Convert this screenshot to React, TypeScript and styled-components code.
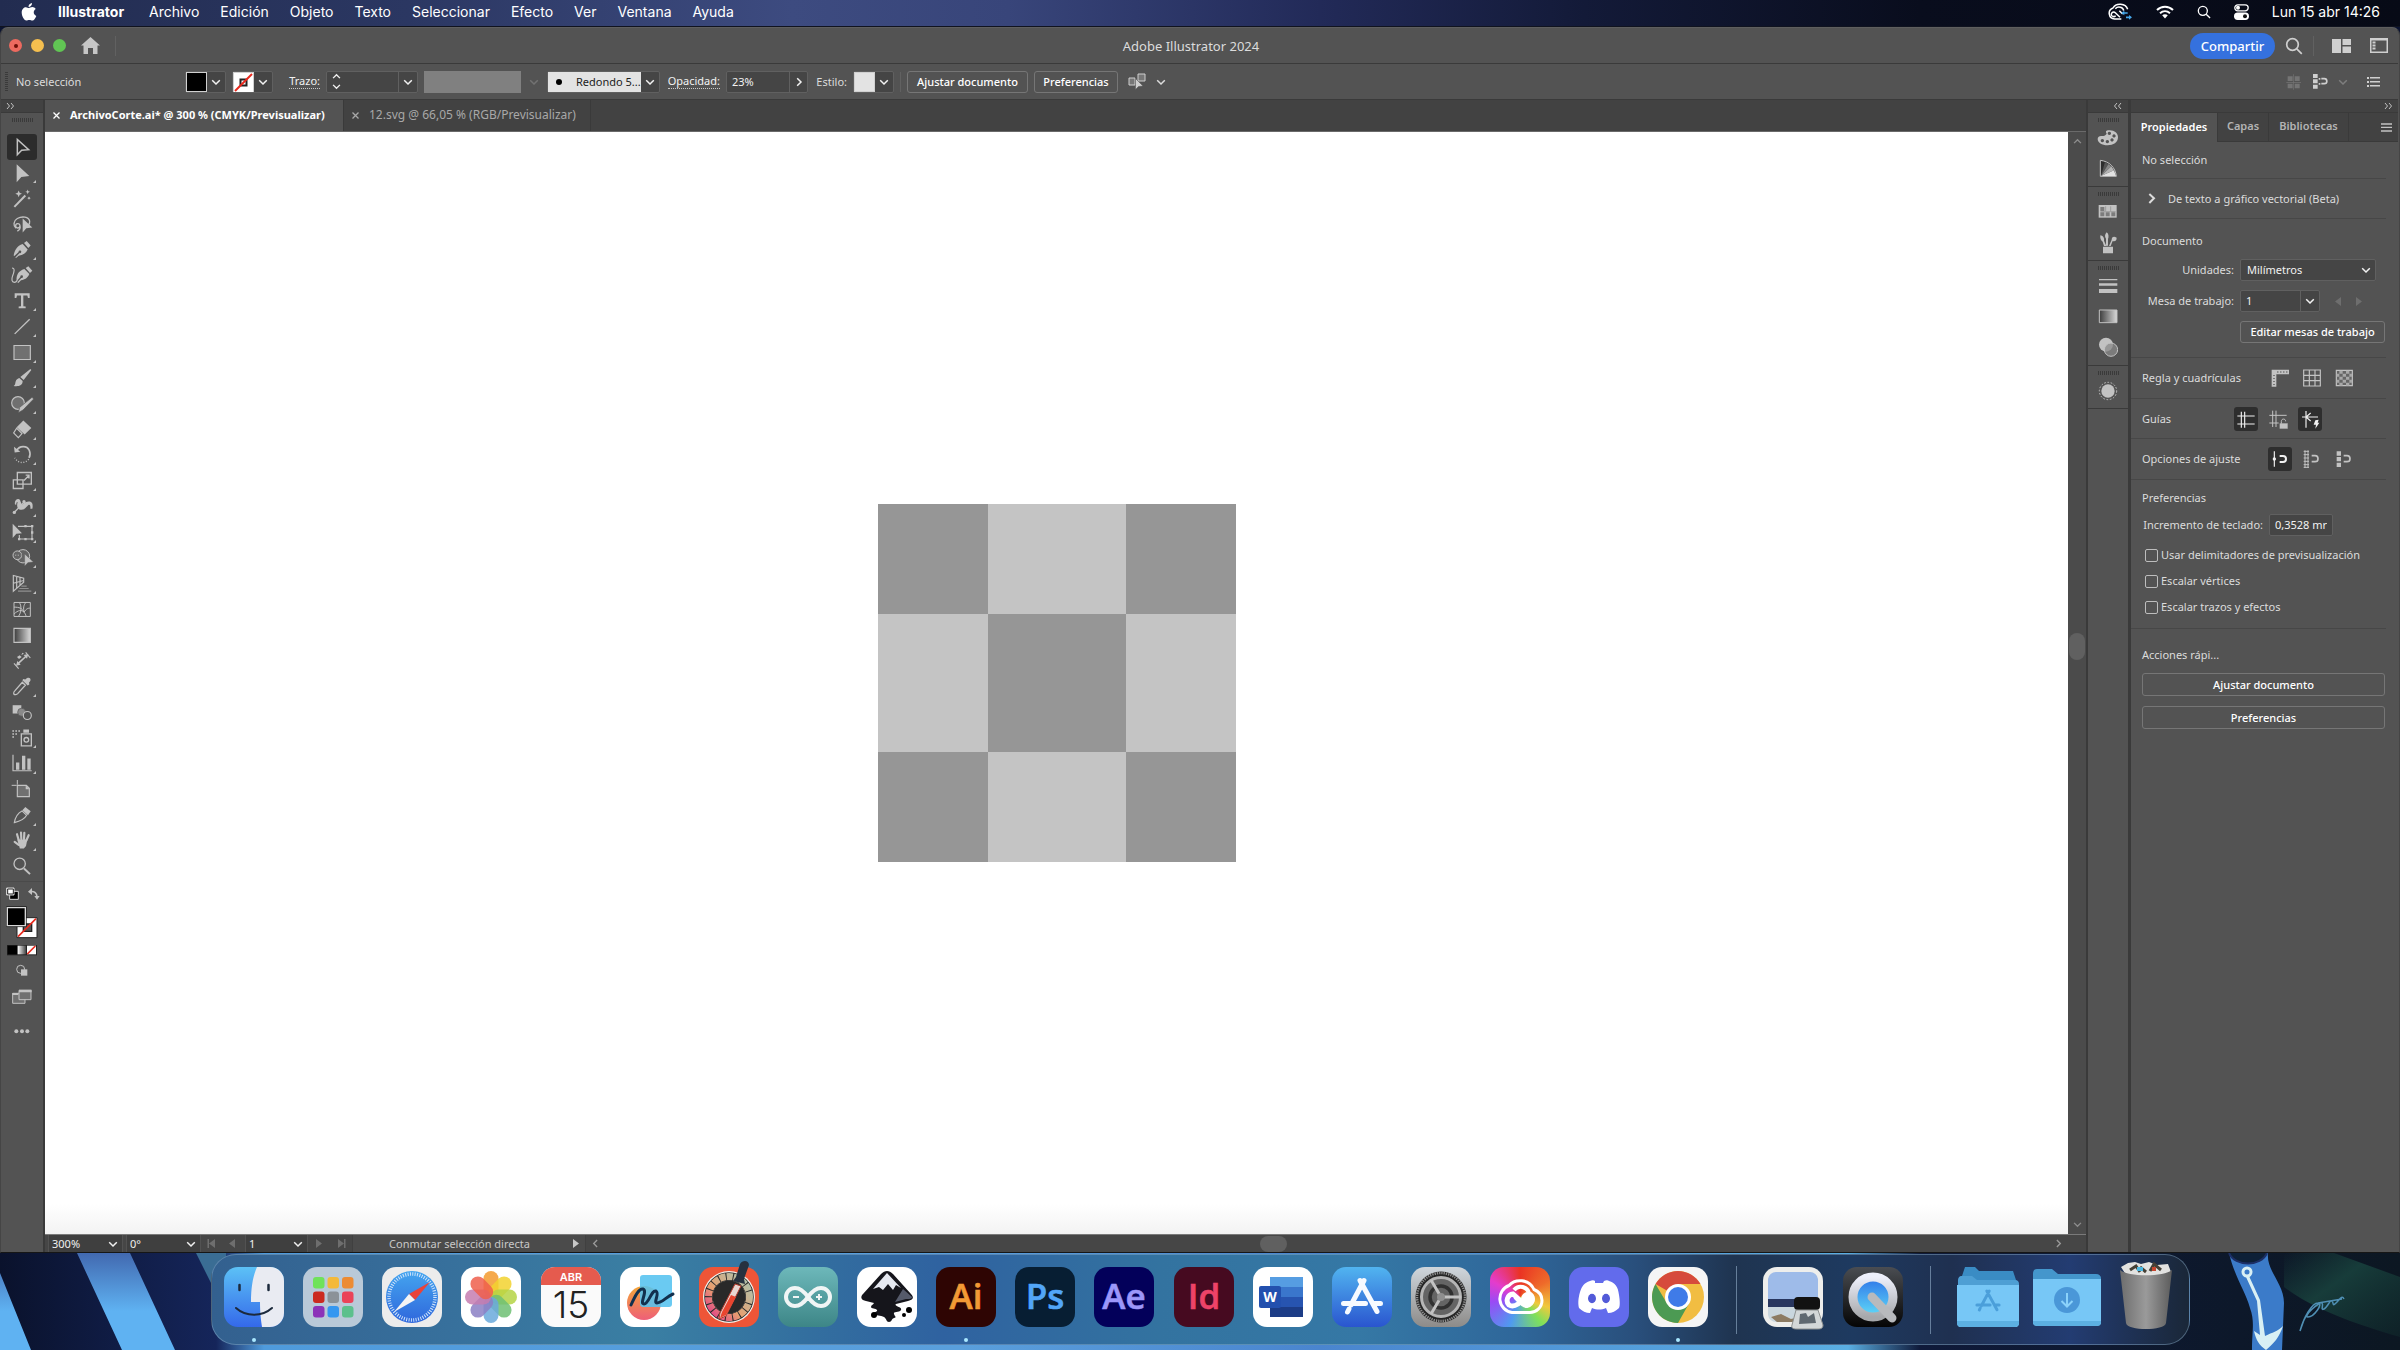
import React from "react";
import styled, { createGlobalStyle, css } from "styled-components";

const c = {
  panel: "#535353",
  dark: "#424242",
  line: "#3a3a3a",
  field: "#454545",
  edge: "#606060",
  text: "#dcdcdc",
  icon: "#c2c2c2",
};
const ui = `"Noto Sans", "Open Sans", sans-serif`;
const mac = `Inter, "Liberation Sans", sans-serif`;

const Global = createGlobalStyle`
  *, *::before, *::after { box-sizing: border-box; }
  body { margin: 0; background: #0b1330; }
  button, input, select { font: inherit; color: inherit; margin: 0; padding: 0; border: 0; background: none; border-radius: 0; }
  svg { display: block; flex: none; }
`;

const Screen = styled.div`
  display: flex;
  flex-direction: column;
  min-height: 100vh;
  font: 11px/16px ${ui};
  color: ${c.text};
`;

/* ---------- system menu bar ---------- */
const MenuBar = styled.nav`
  display: flex;
  align-items: center;
  height: 27px;
  padding: 0 20px 2px 21px;
  font: 14px/20px ${mac};
  color: #fff;
  background: linear-gradient(90deg, #222c50 0, #2b3762 17%, #3d4b80 33%, #38457a 42%, #222a58 55%, #131a38 66%, #090d1d 80%, #070a16 100%);
  border-bottom: 1px solid #10131f;
`;
const MenuList = styled.div`
  display: flex;
  gap: 21px;
  margin-left: 21px;
`;
const MenuItem = styled.button<{ $bold?: boolean }>`
  font-weight: ${(p) => (p.$bold ? 700 : 400)};
  min-width: ${(p) => (p.$bold ? 70 : 0)}px;
  text-align: left;
`;
const Tray = styled.div`
  display: flex;
  align-items: center;
  gap: 23px;
  margin-left: auto;
`;

/* ---------- application window ---------- */
const Win = styled.main`
  flex: 1;
  display: flex;
  flex-direction: column;
  padding-right: 1px;
  background: ${c.panel};
  border: 1px solid #454545;
  border-top-color: #5e5e5e;
  border-bottom: 1px solid #161616;
  border-radius: 8px 8px 0 0;
`;
const TitleBar = styled.header`
  display: grid;
  grid-template-columns: 1fr auto 1fr;
  align-items: center;
  height: 36px;
  padding: 0 9px 0 8px;
  border-bottom: 1px solid ${c.line};
`;
const Side = styled.div<{ $end?: boolean }>`
  display: flex;
  align-items: center;
  gap: 9px;
  justify-content: ${(p) => (p.$end ? "flex-end" : "flex-start")};
`;
const Title = styled.h1`
  margin: 0;
  padding-right: 16px;
  font-size: 13px;
  line-height: 18px;
  font-weight: 400;
`;
const Light = styled.button<{ $c: string }>`
  width: 13px;
  height: 13px;
  border-radius: 50%;
  background: ${(p) => p.$c};
  display: grid;
  place-items: center;
`;
const LightDot = styled.i`
  width: 4px;
  height: 4px;
  border-radius: 50%;
  background: #6d1008;
`;
const Sep = styled.span`
  width: 1px;
  height: 20px;
  background: #616161;
`;
const IconBtn = styled.button<{ $w?: number }>`
  width: ${(p) => p.$w || 20}px;
  height: 24px;
  display: grid;
  place-items: center;
  color: #cfcfcf;
`;
const Share = styled.button`
  width: 85px;
  height: 26px;
  border-radius: 13px;
  background: #3571de;
  color: #fff;
  font-size: 13px;
  line-height: 18px;
  font-weight: 500;
`;

const ControlBar = styled.div`
  display: flex;
  align-items: center;
  gap: 6px;
  height: 36px;
  padding: 0 7px 0 4px;
  border-bottom: 1px solid ${c.line};
`;
const Grip = styled.i<{ $v?: boolean }>`
  width: ${(p) => (p.$v ? 3 : 21)}px;
  height: ${(p) => (p.$v ? 20 : 4)}px;
  background: repeating-linear-gradient(${(p) => (p.$v ? "180deg" : "90deg")}, #3a3a3a 0 1px, transparent 1px 2px);
`;
const State = styled.span`
  width: 165px;
  padding-left: 2px;
`;
const Lab = styled.label<{ $w: number; $dots?: boolean }>`
  width: ${(p) => p.$w}px;
  display: flex;
  justify-content: flex-end;
  span { border-bottom: ${(p) => (p.$dots ? "1px dotted #c8c8c8" : "0")}; line-height: 14px; ${(p) => p.$dots && "color:#f2f2f2;"} }
`;
const Combo = styled.span<{ $w?: number }>`
  display: flex;
  width: ${(p) => p.$w || 41}px;
  height: 22px;
  border: 1px solid ${c.edge};
  border-radius: 2px;
  background: ${c.field};
  color: #f2f2f2;
`;
const Part = styled.button<{ $w?: number; $l?: boolean }>`
  ${(p) => (p.$w ? `width:${p.$w}px;` : "flex:1;")}
  display: grid;
  place-items: center;
  ${(p) => p.$l && `border-left: 1px solid ${c.edge};`}
`;
const Swatch = styled.button<{ $bg: string }>`
  width: 21px;
  background: ${(p) => p.$bg};
  border: 1px solid #d0d0d0;
  display: grid;
  place-items: center;
`;
const Field = styled.input`
  flex: 1;
  min-width: 0;
  padding: 0 5px;
  outline: 0;
`;
const Pick = styled.span`
  flex: 1;
  display: grid;
  grid-template-columns: 1fr 19px;
  align-items: center;
  select {
    appearance: none;
    grid-area: 1 / 1 / 2 / 3;
    height: 100%;
    width: 100%;
    padding-left: 6px;
    outline: 0;
  }
  svg { grid-area: 1 / 2; justify-self: center; pointer-events: none; }
`;
const BrushBox = styled.span`
  display: flex;
  width: 93px;
  align-items: center;
  gap: 14px;
  padding-left: 8px;
  background: #e3e3e3;
  color: #1c1c1c;
`;
const Ghost = styled.span`
  width: 97px;
  height: 22px;
  background: #808080;
`;
const OutBtn = styled.button<{ $w?: number }>`
  ${(p) => p.$w && `width:${p.$w}px;`}
  height: 22px;
  border: 1px solid #767676;
  border-radius: 3px;
  color: #fff;
  font-weight: 500;
`;
const Grow = styled.span<{ $g?: number }>`
  flex: ${(p) => p.$g || 1};
`;

const Body = styled.div`
  flex: 1;
  display: flex;
  background: ${c.dark};
`;
const ToolCol = styled.aside`
  width: 44px;
  display: flex;
  flex-direction: column;
  background: ${c.panel};
  border-right: 2px solid ${c.line};
`;
const Collapse = styled.button<{ $end?: boolean }>`
  height: 13px;
  padding: 0 5px;
  background: ${c.dark};
  border-bottom: 1px solid ${c.line};
  color: ${c.icon};
  display: flex;
  align-items: center;
  justify-content: ${(p) => (p.$end ? "flex-end" : "flex-start")};
`;
const GripRow = styled.div`
  height: 9px;
  display: grid;
  place-items: end center;
`;
const Tools = styled.div`
  margin-top: 12px;
  height: 746px;
  padding-right: 1px;
  display: flex;
  flex-direction: column;
  align-items: center;
`;
const Tool = styled.button<{ $on?: boolean }>`
  flex: 1;
  width: 30px;
  display: grid;
  place-items: center;
  color: ${c.icon};
  border-radius: 3px;
  background: ${(p) => (p.$on ? "#2c2c2c" : "transparent")};
`;
const Swatches = styled.div`
  margin-top: 1px;
  padding-right: 1px;
  border-top: 1px solid #4a4a4a;
  display: flex;
  justify-content: center;
  color: ${c.icon};
`;

const Center = styled.section`
  flex: 1;
  min-width: 0;
  display: flex;
  flex-direction: column;
`;
const Tabs = styled.div`
  display: flex;
  height: 32px;
  border-bottom: 1px solid #6a6a6a;
`;
const Tab = styled.div<{ $on?: boolean; $w: number }>`
  display: flex;
  align-items: center;
  gap: 9px;
  min-width: ${(p) => p.$w}px;
  padding: 0 4px 1px 7px;
  font-weight: ${(p) => (p.$on ? 700 : 400)};
  font-size: ${(p) => (p.$on ? 11 : 12)}px;
  white-space: nowrap;
  color: ${(p) => (p.$on ? "#fff" : "#a8a8a8")};
  background: ${(p) => (p.$on ? c.panel : "transparent")};
  border-right: 1px solid ${c.line};
`;
const TabX = styled.button`
  width: 9px;
  height: 16px;
  display: grid;
  place-items: center;
`;
const CanvasRow = styled.div`
  flex: 1;
  display: flex;
`;
const Canvas = styled.div`
  flex: 1;
  display: grid;
  place-content: center;
  grid-template: 110px 138px 110px / 110px 138px 110px;
  background: linear-gradient(0deg, #f3f3f3 0, #fff 30px);
`;
const Cell = styled.i<{ $d: boolean }>`
  background: ${(p) => (p.$d ? "#969696" : "#c4c4c4")};
`;
const VScroll = styled.div`
  width: 18px;
  display: flex;
  flex-direction: column;
  align-items: center;
  padding: 5px 0;
  background: #4b4b4b;
  color: #8d8d8d;
`;
const Thumb = styled.i<{ $w: number; $h: number }>`
  width: ${(p) => p.$w}px;
  height: ${(p) => p.$h}px;
  border-radius: 8px;
  background: #606060;
`;
const Status = styled.div`
  display: flex;
  height: 18px;
  border-top: 1px solid #7a7a7a;
  background: #464646;
  color: #f0f0f0;
`;
const StatusPick = styled(Pick)<{ $w: number }>`
  flex: none;
  width: ${(p) => p.$w}px;
  background: #3f3f3f;
  border: 1px solid #525252;
  border-width: 0 1px;
  margin-left: 3px;
  select { padding-left: 3px; }
`;
const StatusNav = styled.div<{ $w: number }>`
  width: ${(p) => p.$w}px;
  display: flex;
  align-items: center;
  justify-content: space-around;
  color: #6e6e6e;
`;
const StatusText = styled.div`
  width: 234px;
  display: flex;
  align-items: center;
  color: #c8c8c8;
  background: #4b4b4b;
  border: 1px solid #404040;
  border-width: 0 1px;
  padding-right: 4px;
  span { flex: 1; text-align: center; padding-right: 6px; }
`;
const HScroll = styled.div`
  flex: 1;
  display: flex;
  align-items: center;
  padding: 0 23px 0 5px;
  color: #9a9a9a;
`;

/* ---------- right side ---------- */
const Right = styled.aside`
  display: flex;
  border-left: 2px solid ${c.line};
`;
const Strip = styled.div`
  width: 43px;
  display: flex;
  flex-direction: column;
  background: ${c.panel};
  border-right: 3px solid ${c.line};
`;
const StripTop = styled(Collapse)`
  padding-right: 6px;
`;
const Group = styled.div`
  display: flex;
  flex-direction: column;
  align-items: center;
  padding-bottom: 2px;
  border-bottom: 1px solid ${c.line};
`;
const StripBtn = styled.button`
  width: 30px;
  height: 31px;
  display: grid;
  place-items: center;
  color: ${c.icon};
`;
const Props = styled.div`
  width: 267px;
  display: flex;
  flex-direction: column;
  background: ${c.panel};
`;
const PropTabs = styled.div`
  display: flex;
  height: 29px;
  background: ${c.dark};
  border-bottom: 1px solid ${c.line};
`;
const PropTab = styled.button<{ $on?: boolean; $w: number }>`
  width: ${(p) => p.$w}px;
  height: ${(p) => (p.$on ? 29 : 28)}px;
  padding-bottom: 2px;
  font-weight: 600;
  color: ${(p) => (p.$on ? "#fff" : "#b4b4b4")};
  background: ${(p) => (p.$on ? c.panel : "transparent")};
  border-right: 1px solid ${c.line};
`;
const PropMenu = styled.button`
  margin-left: auto;
  padding-right: 6px;
  color: ${c.icon};
`;
const Sect = styled.section<{ $h?: number; $pad?: string; $last?: boolean }>`
  margin-right: 12px;
  padding: ${(p) => p.$pad || "0 0 0 11px"};
  ${(p) => p.$h && css`height: ${p.$h}px; display: flex; align-items: center;`}
  border-bottom: ${(p) => (p.$last ? "0" : "1px solid #474747")};
`;
const H = styled.h2`
  margin: 0;
  font-size: 11px;
  line-height: 16px;
  font-weight: 400;
`;
const Disclose = styled.button`
  display: flex;
  align-items: center;
  gap: 12px;
  padding-left: 6px;
`;
const Row = styled.div<{ $t: number }>`
  display: flex;
  align-items: center;
  gap: 6px;
  height: 22px;
  margin-top: ${(p) => p.$t}px;
`;
const RowLab = styled.label<{ $w: number }>`
  width: ${(p) => p.$w}px;
  text-align: right;
  white-space: nowrap;
`;
const OptName = styled.span<{ $w: number }>`
  width: ${(p) => p.$w}px;
  white-space: nowrap;
`;
const Opts = styled.div`
  display: flex;
  gap: 8px;
`;
const Opt = styled.button<{ $on?: boolean }>`
  width: 24px;
  height: 24px;
  border-radius: 3px;
  display: grid;
  place-items: center;
  background: ${(p) => (p.$on ? "#2e2e2e" : "transparent")};
  color: ${(p) => (p.$on ? "#f0f0f0" : c.icon)};
`;
const Check = styled.label`
  display: flex;
  align-items: center;
  gap: 3px;
  height: 26px;
  padding-left: 3px;
  input {
    appearance: none;
    width: 13px;
    height: 13px;
    border: 1px solid #bdbdbd;
    border-radius: 2px;
  }
`;
const Wide = styled(OutBtn)`
  display: block;
  width: 243px;
  height: 23px;
  margin-top: 10px;
`;

/* ---------- desktop and dock ---------- */
const Desktop = styled.footer`
  position: relative;
  height: 97px;
  padding-top: 1px;
  background: #0b1330;
`;
const Wall = styled.svg`
  position: absolute;
  inset: 0;
  width: 100%;
  height: 100%;
`;
const Dock = styled.div`
  position: relative;
  display: flex;
  max-width: 1979px;
  height: 91px;
  margin: 0 auto;
  padding: 0 3px;
  border: 1px solid rgba(140, 175, 205, 0.45);
  border-radius: 25px;
  background: linear-gradient(90deg, #33608f 0, #37709c 12%, #3a7fa3 22%, #336f9f 30%, #2f62a0 37%, #3373a0 48%, #3578a5 58%, #2f679a 66%, #294f7c 72%, #1f3450 77%, #1e3a60 83%, #1f3050 88%, #233c72 94%, #1a2738 100%);
`;
const DockApp = styled.button`
  flex: 1;
  min-width: 0;
  display: flex;
  flex-direction: column;
  align-items: center;
  padding-top: 5px;
`;
const Running = styled.i`
  width: 4px;
  height: 4px;
  margin-top: 4px;
  border-radius: 50%;
  background: #a9e8ff;
`;
const DockSep = styled.i`
  width: 1px;
  height: 68px;
  margin: 11px 17px 0 18px;
  background: rgba(160, 190, 215, 0.55);
`;
const Rainbow = styled.div`
  width: 60px;
  height: 60px;
  border-radius: 14px;
  background: conic-gradient(from 0deg, #ea3323, #ee6a2a 60deg, #f0c93c 110deg, #7ee05a 140deg, #4f9af0 200deg, #9a4af5 260deg, #e43ccc 300deg, #ea3323);
`;

/* ---------- small drawings ---------- */
type Box = [number, number, number, number];
const Ico = ({ b, children }: { b: Box; children: React.ReactNode }) => (
  <svg viewBox={b.join(" ")} width={b[2] / 3} height={b[3] / 3} fill="currentColor" aria-hidden>
    {children}
  </svg>
);
const S = (p: any) => <g fill="none" stroke="currentColor" strokeWidth={4} {...p} />;
const Chev = ({ d = "down", o = 1, s = 10 }: { d?: string; o?: number; s?: number }) => {
  const r: any = { down: 0, left: 90, up: 180, right: 270 };
  return (
    <svg width={s} height={s} viewBox="0 0 10 10" opacity={o} aria-hidden>
      <path transform={`rotate(${r[d]} 5 5)`} d="M1.200 3.200 5 7l3.800-3.800" fill="none" stroke="currentColor" strokeWidth="1.500" />
    </svg>
  );
};
const Dbl = ({ l }: { l?: boolean }) => (
  <svg width="9" height="8" viewBox="0 0 9 8" fill="none" stroke="currentColor" aria-hidden>
    <path d={l ? "M4 1 1.500 4 4 7M8 1 5.500 4 8 7" : "M1 1l2.500 3L1 7M5 1l2.500 3L5 7"} />
  </svg>
);
const Tri = ({ l, bar }: { l?: boolean; bar?: boolean }) => (
  <svg width="9" height="9" viewBox="0 0 9 9" fill="currentColor" aria-hidden>
    <g transform={l ? "rotate(180 4.500 4.500)" : undefined}>
      <path d="M1 0l6 4.500-6 4.500z" />
      {bar && <path d="M7 0h1.500v9H7z" />}
    </g>
  </svg>
);
const Lens = ({ s }: { s: number }) => (
  <svg width={s} height={s} viewBox="0 0 18 18" fill="none" stroke="currentColor" strokeWidth="1.700" aria-hidden>
    <circle cx="7.500" cy="7.500" r="5.800" />
    <path d="m11.800 11.800 5 5" />
  </svg>
);
const Cross = () => (
  <svg width="7" height="7" viewBox="0 0 7 7" stroke="currentColor" strokeWidth="1.300" aria-hidden><path d="M.5.5l6 6M6.500.5l-6 6" /></svg>
);
const NoStroke = ({ s }: { s: number }) => (
  <svg width={s} height={s} viewBox="0 0 19 19" aria-hidden>
    <path d="M0 0h19v19H0z" fill="#fff" />
    <path d="M6.500 6.500h6v6h-6z" fill="none" stroke="#222" strokeWidth="2" />
    <path d="M1 18 18 1" stroke="#e8281c" strokeWidth="2" />
  </svg>
);

const rowY = (i: number) => (i < 18 ? 45 + 77.2 * i : 45 + 77.2 * i - 1410);
const tools: { n: string; more?: boolean; art: React.ReactNode }[] = [
  { n: "Selección", art: <S strokeWidth={4.5}><path d="M50 58v46l13-13 21-2z" /></S> },
  { n: "Selección directa", more: true, art: <path d="M48 132v54l14-16 24-3z" /> },
  { n: "Varita mágica", art: <><S strokeWidth={6}><path d="m41 262 33-34" /></S><path d="m54 213 3 7 7 3-7 3-3 7-3-7-7-3 7-3zM81 210l2 5 5 2-5 2-2 5-2-5-5-2 5-2zM85 231l2 3 3 2-3 2-2 3-2-3-3-2 3-2z" /></> },
  { n: "Lazo", art: <><S><path d="M46 325c-9-7-8-22 4-29 15-8 34-5 37 8 1 6-1 10-5 13M58 318c-1-10-14-8-13 1 1 8 13 7 13-1 2 8-1 12-8 16" /></S><path d="M66 296v42l11-13 18-2z" /></> },
  { n: "Pluma", more: true, art: <><path d="m70 369 8-6 12 13-7 8zM66 372l15 16c-5 11-14 17-27 19l-8 7-2-2 13-13a4 4 0 1 0-3-3l-13 12-2-2c3-15 10-29 27-34z" /></> },
  { n: "Curvatura", art: <><path d="m75 446 8-5 12 13-7 7zM71 449l15 15c-5 12-13 17-25 19l-8 8-3-2 12-13a4 4 0 1 0-3-3l-11 13c-2-19 5-31 23-37z" /><S strokeWidth={3.500}><path d="M34 446c10 0 6 13 2 23-4 11-3 20 5 20 5 0 7-3 9-6" /></S></> },
  { n: "Texto", more: true, art: <path d="M42 521h45v14h-5l-2-7H68v32l7 1v5H54v-5l7-1v-32H49l-2 7h-5z" /> },
  { n: "Segmento de línea", more: true, art: <S><path d="m42 642 45-44" /></S> },
  { n: "Rectángulo", more: true, art: <g stroke="currentColor" strokeWidth={3.500}><path d="M40 676h49v42H40z" fill="#707070" /></g> },
  { n: "Pincel", more: true, art: <path d="M89 749l3 3-23 30-10-9zM56 776l10 9c0 14-12 17-27 15 6-4 4-9 6-14 2-6 6-8 11-10z" /> },
  { n: "Pincel de manchas", more: true, art: <><circle cx="52" cy="850" r="19" fill="#707070" stroke="currentColor" strokeWidth={3.500} /><path d="m94 833 5 5-32 33-14 8 4-16z" stroke={c.panel} strokeWidth={2} /></> },
  { n: "Borrador", more: true, art: <><path d="m68 902 24 22-20 20-24-22z" /><S strokeWidth={3.500}><path d="m48 925 16 16-11 12-14-14z" /></S></> },
  { n: "Rotar", more: true, art: <><S strokeWidth={5}><path d="M48 994c8-15 31-16 38 0 4 9 2 17-1 22" /></S><path d="m40 983 2 17 17-2z" /><S strokeDasharray="3 5"><path d="M84 1020c-11 14-31 14-42-4" /></S></> },
  { n: "Escala", more: true, art: <S><path d="M50 1059h42v35H50zM38 1081h29v26H38zM70 1083l14-14M75 1067h10v10" /></S> },
  { n: "Anchura", more: true, art: <><S strokeWidth={4}><path d="m42 1177 30-32" /></S><circle cx="41" cy="1178" r="5" /><circle cx="70" cy="1146" r="5" /><path d="M43 1154c-2-8 2-16 10-16 8 1 6 13 12 16 9-7 22-13 29-4 3 5 2 12 1 17h-6c1-8-1-15-6-11-6 5-8 13-20 14-13 1-16-10-12-23-4 0-4 4-4 8z" /></> },
  { n: "Transformación libre", more: true, art: <><path d="M36 1211v43l11-13 17-1z" /><S strokeWidth={3.500}><path d="M52 1219h42v38H56v-12" /></S><path d="M71 1215h7v7h-7zM91 1215h7v7h-7zM91 1234h7v7h-7zM71 1254h7v7h-7zM91 1254h7v7h-7zM52 1254h7v7h-7z" /></> },
  { n: "Creador de formas", more: true, art: <><circle cx="67" cy="1311" r="20" fill="#646464" stroke="currentColor" strokeWidth={3} /><circle cx="50" cy="1308" r="13" fill="#646464" stroke="currentColor" strokeWidth={3} /><path d="M43 1306h4v4h-4zM51 1306h4v4h-4zM60 1306h4v4h-4zM72 1304v36l10-10 16-2z" stroke="#535353" /></> },
  { n: "Cuadrícula de perspectiva", more: true, art: <S strokeWidth={3.500}><path d="M38 1368v47l31-27v-12zM38 1391l31-8M48 1370v36M58 1373v24" /><path d="M62 1400h16M56 1407h28M52 1415h40" opacity=".55" /></S> },
  { n: "Malla", art: <S strokeWidth={3}><path d="M40 38h49v42H40zM40 52c15 0 25 3 30 15 7-10 11-12 19-12M40 73c12-13 24-13 30-6M55 38c9 7 7 32-2 42M76 38c-8 8-8 17-6 29 3 4 6 8 6 13" /></S> },
  { n: "Degradado", art: <path d="M40 115h49v42H40z" fill="url(#gr)" stroke="currentColor" strokeWidth={3.500} /> },
  { n: "Cota", art: <><S strokeWidth={5}><path d="m52 223 25-23" /></S><S strokeWidth={3.500}><path d="m40 222 14 16M75 189l14 17" /></S><path d="m46 229 4-14 10 11zM83 194l-4 14-10-11zM49 203l8-5 6 5-8 6zM62 197l3-7 5 3z" /></> },
  { n: "Cuentagotas", more: true, art: <><path d="M74 270c4-6 11-7 14-4s2 10-3 13l1 6-5 3-16-16 3-4z" /><S><path d="m65 278 9 9-23 25c-3 3-9 4-11 2s0-8 3-11z" /></S></> },
  { n: "Fusión", art: <><path d="M36 346h26v25H36z" /><circle cx="63" cy="367" r="12" fill="#8a8a8a" stroke={c.panel} strokeWidth={2} /><circle cx="80" cy="377" r="12" fill={c.panel} stroke="currentColor" strokeWidth={3.500} /></> },
  { n: "Rociar símbolos", more: true, art: <><S><path d="M62 434h30v36H62z" /><circle cx="77" cy="452" r="7" /></S><path d="M68 421h17v10H68zM35 423h5v5h-5zM44 423h5v5h-5zM53 423h5v5h-5zM35 432h5v5h-5zM44 432h5v5h-5zM35 441h5v5h-5z" /></> },
  { n: "Gráfica", more: true, art: <><S strokeWidth={3.500}><path d="M37 496v48h56" /></S><path d="M46 519h10v22H46zM64 499h10v42H64zM80 507h10v34H80z" /></> },
  { n: "Mesa de trabajo", art: <><path d="M50 587h27l9 9v25H50z" fill="#707070" stroke="currentColor" strokeWidth={3.500} /><path d="M75 587v12h12z" /><S strokeWidth={3}><path d="M50 571v14M33 587h15" /></S></> },
  { n: "Sector", more: true, art: <><path d="m74 651 16 13-8 12-17-15z" /><S strokeWidth={3.500}><path d="m64 663 14 13c-8 14-20 18-37 22 3-17 11-29 23-35z" /></S></> },
  { n: "Mano", more: true, art: <S strokeWidth={6.500} strokeLinecap="round"><path d="M54 752l-5-17M62 750l-1-20M70 750l1-19M77 754l7-16M54 767l-12-9" /><path d="M54 754h22l-3 15-5 6h-8z" fill="currentColor" /></S> },
  { n: "Zoom", art: <><S><circle cx="57" cy="823" r="17" /></S><S strokeWidth={6}><path d="m70 837 18 17" /></S></> },
];

const Toolbox = () => (
  <ToolCol>
    <Collapse aria-label="Expandir"><Dbl /></Collapse>
    <GripRow><Grip /></GripRow>
    <Tools>
      {tools.map((t, i) => (
        <Tool key={t.n} aria-label={t.n} $on={i === 0}>
          <Ico b={[22, rowY(i), 84, 72]}>
            {t.art}
            {t.more && <path d={`M97 ${rowY(i) + 66}h9v-9z`} />}
          </Ico>
        </Tool>
      ))}
    </Tools>
    <Swatches>
      <Ico b={[5, 877, 120, 470]}>
        <path d="M28 905h26v24H28z" fill="#000" stroke="#d8d8d8" strokeWidth={3} />
        <path d="M19 895h22v21H19z" fill="#fff" stroke="#d8d8d8" strokeWidth={3} /><path d="M22 898h17v15H22z" fill="#fff" stroke="#222" strokeWidth={3} />
        <S strokeWidth={5}><path d="M90 906c12-2 20 4 20 16" /></S><path d="m83 906 12-11v21zM102 919h16l-8 11z" />
        <path d="M50 984h60v60H50z" fill="#fff" stroke="#222" strokeWidth={3} />
        <path d="M69 1003h25v22H69z" fill="#555" stroke="#222" strokeWidth={4} />
        <path d="m53 1041 54-54" stroke="#e8281c" strokeWidth={5} />
        <path d="M19 951h59v60H19z" fill="#000" stroke="#222" strokeWidth={2} /><path d="M21 954h54v54H21z" fill="#000" stroke="#d8d8d8" strokeWidth={4} />
        <path d="M20 1066h90v31H20z" fill="#222" /><path d="M22 1068h28v26H22z" fill="#000" /><path d="M52 1068h25v26H52z" fill="url(#gr2)" /><path d="M80 1068h27v26H80z" fill="#fff" /><path d="m81 1093 24-24" stroke="#e8281c" strokeWidth={5} />
        <linearGradient id="gr2"><stop stopColor="#fff" /><stop offset="1" stopColor="#444" /></linearGradient>
        <linearGradient id="gr"><stop stopColor="#3c3c3c" /><stop offset="1" stopColor="#d8d8d8" /></linearGradient>
        <S strokeWidth={3}><circle cx="61" cy="1139" r="12" /></S><path d="M62 1139h19v19H62z" />
        <path d="M37 1211h37v30H37z" fill="#707070" stroke="currentColor" strokeWidth={3} /><path d="M56 1202h36v28H56z" fill="#707070" stroke="currentColor" strokeWidth={3} /><path d="M56 1200h38v8H56zM36 1210h18v6H36z" />
        <circle cx="48" cy="1325" r="6" /><circle cx="65" cy="1325" r="6" /><circle cx="81" cy="1325" r="6" />
      </Ico>
    </Swatches>
  </ToolCol>
);

const Controls = () => (
  <ControlBar>
    <Grip $v />
    <State>No selección</State>
    <Combo><Swatch $bg="#000" aria-label="Relleno" /><Part aria-label="Relleno, opciones"><Chev /></Part></Combo>
    <Combo><Swatch $bg="#fff" aria-label="Color de trazo"><NoStroke s={19} /></Swatch><Part aria-label="Trazo, opciones"><Chev /></Part></Combo>
    <Lab $w={41} $dots htmlFor="st"><span>Trazo:</span></Lab>
    <Combo $w={92}>
      <Part $w={18} aria-label="Ajustar grosor"><Chev d="up" s={9} /><Chev s={9} /></Part>
      <Field id="st" />
      <Part $w={19} $l aria-label="Grosores"><Chev /></Part>
    </Combo>
    <Ghost />
    <IconBtn $w={14} aria-label="Perfil"><Chev o={0.25} /></IconBtn>
    <Combo $w={113}>
      <BrushBox>
        <svg width="6" height="8" viewBox="0 0 6 8"><circle cx="3" cy="4" r="3" fill="#000" /></svg>
        <span>Redondo 5...</span>
      </BrushBox>
      <Part aria-label="Pinceles"><Chev /></Part>
    </Combo>
    <Lab $w={54} $dots htmlFor="op"><span>Opacidad:</span></Lab>
    <Combo $w={82}><Field id="op" defaultValue="23%" /><Part $w={18} $l aria-label="Opacidades"><Chev d="right" /></Part></Combo>
    <Lab $w={33} as="span"><span>Estilo:</span></Lab>
    <Combo><Swatch $bg="#e3e3e3" aria-label="Estilo" /><Part aria-label="Estilos"><Chev /></Part></Combo>
    <Sep />
    <OutBtn $w={121}>Ajustar documento</OutBtn>
    <OutBtn $w={84}>Preferencias</OutBtn>
    <IconBtn $w={26} aria-label="Seleccionar similares">
      <svg width="18" height="18" viewBox="0 0 18 18" fill="currentColor"><path d="M10 1h7v7h-7z" fill="#777" stroke="currentColor" /><path d="M1 5h6v7H1z" fill="#777" stroke="currentColor" /><path d="M7.500 5.500v11l3-3 4.500-.5z" stroke={c.panel} strokeWidth=".5" /></svg>
    </IconBtn>
    <Chev />
    <Grow />
    <IconBtn aria-label="Alinear a píxel">
      <Ico b={[564, 218, 46, 48]}><g fill="#747474"><path d="M569 225h15v14h-15zM590 225h15v14h-15zM569 247h15v14h-15zM590 247h15v14h-15z" /><path d="M565 242h44v2h-44zM586 219h2v46h-2z" /></g></Ico>
    </IconBtn>
    <IconBtn aria-label="Ajustar">
      <Ico b={[646, 219, 50, 50]}><path d="M649 222h14v12h-14zM649 238h14v12h-14zM649 254h14v12h-14zM666 234h5v5h-5zM666 249h5v5h-5z" /><S strokeWidth={5}><path d="M674 236h9a7 7 0 0 1 0 15h-9" /></S></Ico>
    </IconBtn>
    <IconBtn $w={14} aria-label="Opciones de ajuste"><Chev o={0.35} /></IconBtn>
    <IconBtn $w={35} aria-label="Menú del panel">
      <svg width="13" height="10" viewBox="0 0 13 10" fill="currentColor"><path d="M0 0h2v2H0zM3 0h10v1.500H3zM0 4h2v2H0zM3 4h10v1.500H3zM0 8h2v2H0zM3 8h10v1.500H3z" /></svg>
    </IconBtn>
  </ControlBar>
);

const stripGroups: [string, React.ReactNode][][] = [
  [
    ["Color", <Ico b={[115, 88, 66, 54]}><path fillRule="evenodd" d="M144 102c-5-8 0-11 9-10 15 1 25 8 25 21 0 16-14 24-31 24-18 0-30-9-30-19 0-6 5-9 10-9 9 0 12 0 17-7zM131 118a5 5 0 1 0 .1 0zM146 121a5 5 0 1 0 .1 0zM160 116a5 5 0 1 0 .1 0zM166 104a5 5 0 1 0 .1 0zM152 96a5 5 0 1 0 .1 0z" /></Ico>],
    ["Guía de color", <Ico b={[117, 178, 60, 56]}><path d="M124 182v48h48c-3-28-22-45-48-48z" fill="#2d2d2d" stroke="currentColor" strokeWidth={3} /><path d="m126 229 12-42 10 6z" fill="#555" /><path d="m126 229 22-36 9 7z" fill="#888" /><path d="m126 229 31-29 8 12z" fill="#b5b5b5" /><path d="m126 229 39-17 6 17z" fill="#e2e2e2" /></Ico>],
  ],
  [
    ["Muestras", <Ico b={[117, 316, 60, 44]}><path d="M119 319h54v38h-54z" /><path d="M124 325h12v12h-12zM124 341h12v12h-12zM140 341h12v12h-12zM157 341h12v12h-12z" fill="#7c7c7c" /><path d="M140 323v14M155 323v14M124 339h46" stroke="#8a8a8a" strokeWidth={2} /></Ico>],
    ["Pinceles", <Ico b={[117, 394, 60, 66]}><path d="M132 438h30v20h-30zM124 404c7 0 13 9 11 16l7 16h-7l-4-13c-6-3-8-11-7-19zM143 395c6 4 7 14 4 20v20h-6v-21c-5-6-3-14 2-19zM173 411c0 10-6 12-12 10l-6 15h-5l8-19c0-8 6-12 15-6z" /></Ico>],
  ],
  [
    ["Trazo", <Ico b={[117, 534, 60, 48]}><path d="M120 537h55v4h-55zM120 550h55v7h-55zM120 567h55v12h-55z" /></Ico>],
    ["Degradado", <Ico b={[117, 626, 60, 44]}><path d="M121 629h53v38h-53z" fill="url(#gr)" stroke="currentColor" strokeWidth={3} /></Ico>],
    ["Transparencia", <Ico b={[114, 709, 62, 62]}><circle cx="138" cy="732" r="21" /><circle cx="153" cy="747" r="20" fill="#888" fillOpacity=".75" stroke="currentColor" strokeWidth={3} /></Ico>],
  ],
  [["Apariencia", <Ico b={[117, 841, 60, 60]}><circle cx="147" cy="871" r="20" /><circle cx="147" cy="871" r="26" fill="none" stroke="currentColor" strokeWidth={3} strokeDasharray="5 5" /></Ico>]],
];

const guides = <path d="M531 47h52M531 71h52M543 34v48M553 34v48" />;
const magnet = (x: number, y: number, w = 5) => <path d={`M${x} ${y - 9}h10a9 9 0 0 1 0 18h-10`} strokeWidth={w} />;

const Properties = () => (
  <Props>
    <Collapse $end aria-label="Contraer paneles"><Dbl /></Collapse>
    <PropTabs>
      <PropTab $on $w={87}>Propiedades</PropTab>
      <PropTab $w={51}>Capas</PropTab>
      <PropTab $w={80}>Bibliotecas</PropTab>
      <PropMenu aria-label="Menú"><Ico b={[965, 70, 33, 27]}><path d="M965 71h33v4h-33zM965 81h33v4h-33zM965 92h33v4h-33z" /></Ico></PropMenu>
    </PropTabs>
    <Sect $h={37}><H>No selección</H></Sect>
    <Sect $h={40}><Disclose><Ico b={[262, 283, 24, 34]}><S strokeWidth={6}><path d="m266 286 14 13-14 14" /></S></Ico>De texto a gráfico vectorial (Beta)</Disclose></Sect>
    <Sect $pad="14px 0 14px 11px">
      <H>Documento</H>
      <Row $t={10}>
        <RowLab $w={92} htmlFor="un">Unidades:</RowLab>
        <Combo $w={136}><Pick><select id="un"><option>Milímetros</option></select><Chev /></Pick></Combo>
      </Row>
      <Row $t={9}>
        <RowLab $w={92} htmlFor="ms">Mesa de trabajo:</RowLab>
        <Combo $w={80}><Field id="ms" defaultValue="1" /><Part $w={19} $l aria-label="Mesas"><Chev /></Part></Combo>
        <StatusNav $w={44}><Tri l /><Tri /></StatusNav>
      </Row>
      <Row $t={9}><RowLab as="span" $w={92} /><OutBtn $w={145}>Editar mesas de trabajo</OutBtn></Row>
    </Sect>
    <Sect $h={41}>
      <OptName $w={126}>Regla y cuadrículas</OptName>
      <Opts>
        <Opt aria-label="Reglas"><Ico b={[633, 808, 54, 54]}><path fillRule="evenodd" d="M635 810h52v14h-38v37h-14zM640 826v3h4v-3zM640 835v3h4v-3zM640 844v3h4v-3zM640 853v3h4v-3zM652 815v4h3v-4zM661 815v4h3v-4zM670 815v4h3v-4zM679 815v4h3v-4z" /></Ico></Opt>
        <Opt aria-label="Cuadrícula"><Ico b={[729, 808, 54, 54]}><S strokeWidth={3.500}><path d="M731 811h50v48h-50zM731 827h50M731 843h50M748 811v48M765 811v48" /></S></Ico></Opt>
        <Opt aria-label="Cuadrícula de transparencia"><Ico b={[825, 808, 54, 54]}><path d="M829 812h48v46h-48z" fill="#666" stroke="currentColor" strokeWidth={3.500} /><path d="M838 813h10v9h-10zM858 813h10v9h-10zM830 822h8v9h-8zM848 822h10v9h-10zM868 822h8v9h-8zM838 831h10v9h-10zM858 831h10v9h-10zM830 840h8v9h-8zM848 840h10v9h-10zM868 840h8v9h-8zM838 849h10v9h-10zM858 849h10v9h-10z" fill="#a8a8a8" /></Ico></Opt>
      </Opts>
    </Sect>
    <Sect $h={40}>
      <OptName $w={92}>Guías</OptName>
      <Opts>
        <Opt $on aria-label="Mostrar guías"><Ico b={[527, 26, 60, 60]}><S strokeWidth={3.500}>{guides}</S></Ico></Opt>
        <Opt aria-label="Bloquear guías"><Ico b={[624, 28, 60, 60]}><S strokeWidth={3}><path d="M628 47h52M628 70h28M638 33v49M648 33v49M664 72v-7c0-9 13-9 13 0" /></S><path d="M659 71h24v16h-24z" /></Ico></Opt>
        <Opt $on aria-label="Guías inteligentes"><Ico b={[720, 26, 60, 60]}><S strokeWidth={3.500}><path d="M726 50h48M738 32v50M752 38l-14 12 14 12" /></S><path d="m766 60 10-2-3 9h5l-12 18 2-12h-7z" /></Ico></Opt>
      </Opts>
    </Sect>
    <Sect $h={41}>
      <OptName $w={126}>Opciones de ajuste</OptName>
      <Opts>
        <Opt $on aria-label="Ajustar a punto"><Ico b={[627, 149, 60, 60]}><S strokeWidth={3.500}><path d="M640 156v46" />{magnet(656, 179, 6)}</S><circle cx="640" cy="179" r="5" /></Ico></Opt>
        <Opt aria-label="Ajustar a cuadrícula"><Ico b={[723, 149, 60, 60]}><S strokeWidth={3}><path d="M728 156h16M728 166h16M728 176h16M728 186h16M728 196h16M728 204h16M732 153v53M741 153v53" />{magnet(752, 178)}</S></Ico></Opt>
        <Opt aria-label="Ajustar a píxel"><Ico b={[820, 149, 60, 60]}><path d="M828 156h13v13h-13zM828 173h13v13h-13zM828 190h13v13h-13z" /><S>{magnet(849, 178)}</S></Ico></Opt>
      </Opts>
    </Sect>
    <Sect $pad="10px 0 10px 11px">
      <H>Preferencias</H>
      <Row $t={8}>
        <RowLab $w={121} htmlFor="inc">Incremento de teclado:</RowLab>
        <Combo $w={64}><Field id="inc" defaultValue="0,3528 mr" /></Combo>
      </Row>
      <Row $t={8}><Check><input type="checkbox" />Usar delimitadores de previsualización</Check></Row>
      <Row $t={4}><Check><input type="checkbox" />Escalar vértices</Check></Row>
      <Row $t={4}><Check><input type="checkbox" />Escalar trazos y efectos</Check></Row>
    </Sect>
    <Sect $last $pad="18px 0 0 11px">
      <H>Acciones rápi...</H>
      <Wide>Ajustar documento</Wide>
      <Wide>Preferencias</Wide>
    </Sect>
  </Props>
);

/* ---------- dock artwork, 60 × 60 tiles ---------- */
const Tile = ({ f = "#fff" }: { f?: string }) => <rect x="0" y="0" width="60" height="60" rx="14" fill={f} />;
const T = ({ children, f }: { children: string; f: string }) => (
  <text x="30" y="42" textAnchor="middle" fontFamily="Open Sans, sans-serif" fontWeight="600" fontSize="35" fill={f} stroke={f} strokeWidth=".6">{children}</text>
);
const petals = ["#f39a2e", "#f2d22f", "#b5d445", "#6fbf73", "#6aa9dc", "#8b7fc4", "#c67db0", "#ee5f4c"];
const pads = ["#6fe25a", "#f3b93a", "#ec8b33", "#cb2a20", "#8b9298", "#ea4358", "#8c33b8", "#3597f0", "#5cc08c"];
const A = ({ f }: { f: string }) => (
  <g stroke={f} strokeWidth="5" strokeLinecap="round"><path d="M32 13.500 19 38M28 13.500l17 31M11.500 36.500h22M42 36.500h6.500M17 42l-1.500 3" fill="none" /></g>
);
const apps: { n: string; run?: boolean; sep?: boolean; art: React.ReactNode }[] = [
  { n: "Finder", run: true, art: <><Tile f="url(#fi)" /><path d="M33 0h13a14 14 0 0 1 14 14v32a14 14 0 0 1-14 14h-8c-1-7-2-14-2-25h-9C27 20 29 9 33 0z" fill="#e9ebf2" /><path d="M15.500 18v5M44.500 18v5" stroke="#1c2a3c" strokeWidth="2.500" strokeLinecap="round" /><path d="M12 41c10 9 26 9 36 0" fill="none" stroke="#1c2a3c" strokeWidth="2" strokeLinecap="round" /></> },
  { n: "Launchpad", art: <><Tile f="#b9c9d8" />{pads.map((p, i) => <rect key={i} x={10 + (i % 3) * 14.5} y={10 + Math.floor(i / 3) * 14.5} width="11.500" height="11.500" rx="3" fill={p} />)}</> },
  { n: "Safari", art: <><Tile f="#ececec" /><circle cx="30" cy="30" r="26" fill="url(#sa)" /><circle cx="30" cy="30" r="23" fill="none" stroke="#cfe4fb" strokeWidth="3.500" strokeDasharray="1 1.400" /><path d="M48 15 33 33l-6-6z" fill="#e8433a" /><path d="M12 45l15-18 6 6z" fill="#f4f4f4" /></> },
  { n: "Fotos", art: <><Tile />{petals.map((p, i) => <rect key={i} x="22.500" y="4" width="15" height="26" rx="7.500" fill={p} opacity=".85" transform={`rotate(${i * 45} 30 30)`} />)}</> },
  { n: "Calendario", art: <><Tile f="#fafafa" /><path d="M0 18v-4A14 14 0 0 1 14 0h32a14 14 0 0 1 14 14v4z" fill="#e55b4e" /><text x="30" y="14" textAnchor="middle" fontFamily="Inter, sans-serif" fontWeight="600" fontSize="11" fill="#fff">ABR</text><text x="30" y="51" textAnchor="middle" fontFamily="Inter, sans-serif" fontWeight="300" fontSize="37" fill="#222">15</text></> },
  { n: "Freeform", art: <><Tile /><circle cx="24" cy="36" r="17" fill="url(#ff)" /><rect x="20" y="8" width="32" height="32" rx="3" fill="#55c3f0" opacity=".88" /><path d="M11 38c4-9 8-17 12-16 5 2-4 15 1 15s7-14 12-13c4 2-3 12 1 12 5 0 9-6 16-9" fill="none" stroke="#12304e" strokeWidth="3" strokeLinecap="round" /></> },
  { n: "Selector de color", art: <><Tile f="#ee5537" /><circle cx="30" cy="30" r="26" fill="#f4f1ec" /><circle cx="30" cy="30" r="20.500" fill="none" stroke="#2c2c2c" strokeWidth="8.500" /><circle cx="30" cy="30" r="20.500" fill="none" stroke="url(#cw)" strokeWidth="7" strokeDasharray="6.200 1" /><circle cx="30" cy="30" r="16.500" fill="#292929" /><path d="m36 17 6 2-15 30-7 3 1-6z" fill="#e9d7d2" stroke="#b43a2c" /><path d="m32 28 5 2-10 18-6 3 2-6z" fill="#e9452f" /><path d="M41-3c2-4 9-4 9 1l-5 14 1 5-12-3 3-4z" fill="#26313f" /></> },
  { n: "Arduino", art: <><Tile f="url(#ar)" /><path d="M30 30c-5-7-9-9-13-9a9 9 0 0 0 0 18c4 0 8-2 13-9s9-9 13-9a9 9 0 0 1 0 18c-4 0-8-2-13-9z" fill="none" stroke="#f0f5f5" strokeWidth="4" /><path d="M15 30h6M38 30h6M41 27v6" stroke="#f0f5f5" strokeWidth="2" /></> },
  { n: "Inkscape", art: <><Tile /><path d="M30 4c2 0 4 1 6 3l18 20c4 4 1 6-3 7l-12 3c-3 2 7 3 5 6s-8 1-7 4 3 3 0 4-2 4-5 4-2-3-5-5-9-1-10-3 4-2 3-4-6-1-6-3 2-2 3-4L9 34c-5-1-6-4-3-7L24 7c2-2 4-3 6-3z" fill="#15151b" /><path d="m30 6 14 15-5-3-3 5-5-6-5 6-4-3-6 2z" fill="#e5e8f0" /><path d="m46 22 9 8c0 2-3 2-6 2L38 35z" fill="#8088a0" opacity=".6" /><circle cx="17" cy="48" r="3" /><circle cx="52" cy="43" r="3" /><circle cx="47" cy="48" r="2" /></> },
  { n: "Illustrator", run: true, art: <><Tile f="#2e0503" /><T f="#f39a35">Ai</T></> },
  { n: "Photoshop", art: <><Tile f="#071e33" /><T f="#52a6f8">Ps</T></> },
  { n: "After Effects", art: <><Tile f="#03005a" /><T f="#9c97fa">Ae</T></> },
  { n: "InDesign", art: <><Tile f="#460a20" /><T f="#ee4368">Id</T></> },
  { n: "Word", art: <><Tile /><path d="M17 10h33v10H17z" fill="#569de2" /><path d="M17 20h33v10H17z" fill="#3a76cc" /><path d="M17 30h33v10H17z" fill="#2754b0" /><path d="M17 40h33v10H17z" fill="#1c3c86" /><rect x="6" y="19" width="22" height="22" rx="2" fill="#2350ae" /><text x="17" y="35" textAnchor="middle" fontFamily="Open Sans, sans-serif" fontWeight="700" fontSize="14" fill="#fff">W</text></> },
  { n: "App Store", art: <><Tile f="url(#as)" /><A f="#f7faff" /></> },
  { n: "Ajustes", art: <><Tile f="url(#se)" /><circle cx="30" cy="30" r="25.500" fill="#262626" /><circle cx="30" cy="30" r="24" fill="none" stroke="#8f8f8f" strokeWidth="2.500" strokeDasharray="1.300 1" /><circle cx="30" cy="30" r="19.500" fill="#646464" stroke="#b5b5b5" strokeWidth="3" /><circle cx="30" cy="30" r="11" fill="none" stroke="#303030" strokeWidth="3.500" /><path d="M30 30h20M30 30 20 13M30 30 20 47" stroke="#c2c2c2" strokeWidth="3" /><circle cx="30" cy="30" r="4" fill="#8f8f8f" /></> },
  { n: "Creative Cloud", art: <><foreignObject x="0" y="0" width="60" height="60"><Rainbow /></foreignObject><path d="M22 45.500a14 14 0 0 1-3-27c6-7 20-7 25 4 5 2 8 6 8 11 0 7-6 12-12 12z" fill="none" stroke="#fff" strokeWidth="3" /><path d="M33 36 23 27a6.500 6.500 0 0 0-4 11c3 2 6 1 9-1" fill="none" stroke="#fff" strokeWidth="5" strokeLinecap="round" /><path d="M24 23c5-6 13-3 15 3a7 7 0 0 1-2 13c-4 0-6-3-12-9" fill="none" stroke="#fff" strokeWidth="4" /><circle cx="38" cy="32" r="7" fill="#fff" /></> },
  { n: "Discord", art: <><Tile f="#626bec" /><path d="M21 14c2-1 4-1 5 0v2h8l1-2c2-1 4-1 5 0 6 2 9 5 10 14 1 6 1 11 0 13-3 3-7 5-11 5l-2-5c-5 2-9 2-14 0l-2 5c-4 0-8-2-11-5-1-4-1-9 1-16 2-6 4-9 10-11z" fill="#fff" /><ellipse cx="23" cy="31.500" rx="4" ry="4.700" fill="#525ad8" /><ellipse cx="37" cy="31.500" rx="4" ry="4.700" fill="#525ad8" /></> },
  { n: "Chrome", run: true, art: <><Tile f="#f5f5f5" /><circle cx="30" cy="30" r="26" fill="#f1bd42" /><path d="M30 30 7.500 17a26 26 0 0 1 45 0H30z" fill="#d64a3c" /><path d="M7.500 17a26 26 0 0 0 22.500 39l11-19.500L19 36.500z" fill="#4c9a53" /><circle cx="30" cy="30" r="13" fill="#fff" /><circle cx="30" cy="30" r="10" fill="#3f7be8" /></> },
  { n: "Vista Previa", sep: true, art: <><Tile f="#eeeeec" /><path d="M5 12a8 8 0 0 1 8-7h34a8 8 0 0 1 8 7v20H5z" fill="#9ebbe9" /><path d="M5 32h50v8H5z" fill="#28365f" /><path d="M5 40h50v8a8 8 0 0 1-8 7H13a8 8 0 0 1-8-7z" fill="#c9d6de" /><path d="M8 50l10-3 10 5 8-2v5H14z" fill="#8c7b63" /><rect x="31" y="30" width="26" height="13" rx="4" fill="#121212" /><path d="M33 43h22l5 15c0 4-3 4-6 4H34c-4 0-6-1-5-4z" fill="#d3d7d8" stroke="#8c9090" /><path d="m37 47 6-1 2 4 6-4 2 10-17 1z" fill="#5f6870" /></> },
  { n: "QuickTime", art: <><Tile f="url(#qb)" /><circle cx="30" cy="30" r="20" fill="url(#qc)" stroke="url(#qs)" strokeWidth="9" /><path d="m29 30 20 21" stroke="#b8babd" strokeWidth="9" strokeLinecap="round" /></> },
  { n: "Aplicaciones", sep: true, art: <><path d="M3 12 7 0h10l4 4h34l4 12v8H3z" fill="#3a8cc4" /><path d="M0 14c0-3 1-5 4-5h10l5 4h38c3 0 4 2 4 4v38c0 3-1 5-4 5H3c-2 0-3-2-3-5z" fill="#4e9fd4" /><path d="M-1 18h62v37c0 3-1 5-4 5H3c-3 0-4-2-4-5z" fill="#77c7f6" /><path d="M-1 54h62v2c0 2-2 4-4 4H3c-3 0-4-2-4-4z" fill="#5cb0e2" /><g transform="translate(12 16) scale(.6)"><A f="#4b9fda" /></g></> },
  { n: "Descargas", art: <><path d="M-4 7c0-3 1-5 4-5h15l6 5h38c3 0 5 2 5 4v10H-4z" fill="#4496cc" /><path d="M-4 12h68v43c0 3-2 4-5 4H1c-3 0-5-1-5-4z" fill="#77c7f6" /><path d="M-4 54h68v2c0 2-2 3-5 3H1c-3 0-5-1-5-3z" fill="#5cb0e2" /><circle cx="30" cy="33" r="13" fill="#4a97d8" /><path d="M30 26v13M24.500 34l5.500 5.500 5.500-5.500" fill="none" stroke="#8bd2fa" strokeWidth="2" /></> },
  { n: "Papelera", art: <><path d="M5 0 12-4l7-1 6 2 8-2 8 3 11-1 3 8-10 6H12z" fill="#e2e2e0" /><path d="m14 3 6-4 4 6M34 4l4-7 7 6M24 0l6 5" stroke="#454036" strokeWidth="3" fill="none" /><path d="M21 0h6v4h-6z" fill="#4bb7e0" /><path d="M36 0h4v4h-4z" fill="#c6452e" /><path d="M4 3c8 7 44 7 52 0l-6 53c-1 8-39 8-40 0z" fill="url(#tr)" /></> },
];

const grads = [
  ["fi", "#5cc1f6", "#3469ea"], ["sa", "#44a5ef", "#2f67dc"], ["ff", "#f4a638", "#ee5f78"],
  ["ar", "#6db8ba", "#3d8687"], ["as", "#51b4f0", "#2a55cf"], ["se", "#cfd6dc", "#8d8b89"],
  ["qb", "#4a4d52", "#050505"], ["qc", "#2e74e8", "#61dcf8"], ["qs", "#eef0fb", "#a6a8ab"],
];

const DockArea = () => (
  <Desktop>
    <Wall viewBox="0 0 2400 97" preserveAspectRatio="xMidYMid slice" aria-hidden>
      <defs>
        <linearGradient id="wl"><stop stopColor="#0a122c" /><stop offset=".09" stopColor="#15255a" /><stop offset=".11" stopColor="#4f9bdc" /><stop offset=".4" stopColor="#5a9fdc" /><stop offset=".55" stopColor="#4a85cf" /><stop offset=".77" stopColor="#5aaee2" /><stop offset=".8" stopColor="#0f1a3a" /><stop offset="1" stopColor="#0c1722" /></linearGradient>
        <linearGradient id="sb" x1="0" y1="0" x2="0" y2="1"><stop stopColor="#4269b0" /><stop offset=".6" stopColor="#5fb2f2" /></linearGradient>
        <linearGradient id="gn" x1="0" y1="0" x2="1" y2="1"><stop stopColor="#173c3a" stopOpacity="0" /><stop offset=".4" stopColor="#173c3a" /><stop offset="1" stopColor="#12302f" stopOpacity=".4" /></linearGradient>
        {grads.map(([id, a, b]) => (
          <linearGradient key={id} id={id} x1="0" y1="0" x2="0" y2="1"><stop stopColor={a} /><stop offset="1" stopColor={b} /></linearGradient>
        ))}
        <linearGradient id="cw" x1="0" y1="1" x2="1" y2="0"><stop stopColor="#e0358a" /><stop offset=".4" stopColor="#e8a070" /><stop offset="1" stopColor="#a9c6b2" /></linearGradient>
        <linearGradient id="tr"><stop stopColor="#6d6d6d" /><stop offset=".5" stopColor="#9a9a9a" /><stop offset="1" stopColor="#5c5c5c" /></linearGradient>
      </defs>
      <path d="M0 0h2400v97H0z" fill="url(#wl)" />
      <path d="M77 0h53l45 97h-53zM0 20l31 77H0z" fill="url(#sb)" />
      <path d="M196 0h30v60z" fill="#3a6d94" />
      <path d="M2284 0h50l66 24v60c-50-14-90-30-116-50z" fill="url(#gn)" />
      <path d="M2229 0h39c-2 18 16 30 16 50l-2 47h-30c0-20 3-28-2-42-5-18-15-30-21-55z" fill="#3b7bc9" />
      <path d="M2229 0c6 14 32 14 38 0" fill="#0d2037" stroke="#1c2f66" strokeWidth="2" />
      <circle cx="2247" cy="19" r="4" fill="none" stroke="#d9f0f4" strokeWidth="3" />
      <path d="m2246 24 3-1 11 24 5 36c8-4 12-4 18-10-4 12-9 17-17 24-7-5-10-10-12-19l6 4-3-34z" fill="#d9f0f4" />
      <path d="M2300 78c4-14 12-28 18-28s-4 14-10 14 12-16 14-14-2 8 2 6 6-10 8-8 0 6 4 2 6-8 8-4M2318 50l24-4" fill="none" stroke="#4f8fb4" strokeWidth="1.500" />
    </Wall>
    <Dock>
      {apps.map((a) => (
        <React.Fragment key={a.n}>
          {a.sep && <DockSep />}
          <DockApp aria-label={a.n}>
            <svg width="62" height="74" viewBox="-1 -7 62 74" overflow="visible">{a.art}</svg>
            {a.run && <Running />}
          </DockApp>
        </React.Fragment>
      ))}
    </Dock>
  </Desktop>
);

export default function App() {
  return (
    <Screen>
      <Global />
      <MenuBar>
        <svg width="16" height="18" viewBox="0 0 16 18" fill="#fff" aria-hidden><path d="M11 0c.2 2-1.500 4-3.500 4C7.300 2 9.200.2 11 0zM7.900 5c.8 0 1.900-.9 3.400-.9 1.300 0 2.600.7 3.400 1.900-2.900 1.700-2.400 5.700.6 6.900-.7 1.900-2.300 4.700-4 4.700-1.200 0-1.600-.7-3-.7s-1.900.7-3 .7C3 17.600.7 13 .7 9.600c0-3.500 2.200-5.400 4.200-5.400 1.300 0 2.200.8 3 .8z" /></svg>
        <MenuList>
          {["Illustrator", "Archivo", "Edición", "Objeto", "Texto", "Seleccionar", "Efecto", "Ver", "Ventana", "Ayuda"].map((m, i) => (
            <MenuItem key={m} $bold={i === 0}>{m}</MenuItem>
          ))}
        </MenuList>
        <Tray>
          <Ico b={[40, 13, 74, 52]}>
            <g color="#fff"><S strokeWidth={4.5}><path d="M80 61H60a17 17 0 0 1-5-33c9-16 38-15 44 4" /><path d="M76 56 62 42a7 7 0 0 0-10 10c4 3 8 2 11-1M62 30c8-9 24-5 25 6M84 46 74 36" /></S></g>
            <g color="#46a8ea"><path d="m80 43 9-7v14zM112 56l-9-7v14z" /><S strokeWidth={5}><path d="M86 43h13M94 56h12" /></S></g>
          </Ico>
          <svg width="18" height="14" viewBox="0 0 18 14" fill="none" stroke="#fff" strokeWidth="2" aria-hidden><path d="M1 5c4.500-4.500 11.500-4.500 16 0M4 8.200c3-2.700 7-2.700 10 0" /><path d="m9 13.500 2.800-3.200c-1.600-1.300-4-1.300-5.600 0z" fill="#fff" stroke="none" /></svg>
          <Lens s={14} />
          <svg width="15" height="16" viewBox="0 0 15 16" aria-hidden><rect x=".8" y=".8" width="13.400" height="6" rx="3" fill="none" stroke="#fff" strokeWidth="1.300" /><circle cx="4" cy="3.800" r="2" fill="#fff" /><rect x="0" y="8.500" width="15" height="7.500" rx="3.700" fill="#fff" /><circle cx="11" cy="12.200" r="2" fill="#111" /></svg>
          <time>Lun 15 abr 14:26</time>
        </Tray>
      </MenuBar>
      <Win>
        <TitleBar>
          <Side>
            <Light $c="#ed6a5f" aria-label="Cerrar"><LightDot /></Light>
            <Light $c="#f5bf4f" aria-label="Minimizar" />
            <Light $c="#61c554" aria-label="Ampliar" />
            <IconBtn $w={31} aria-label="Inicio"><svg width="19" height="17" viewBox="0 0 19 17" fill="#c6c6c6"><path d="M9.500 0 19 8.500h-2.500V17H12v-6H7v6H2.500V8.500H0z" /></svg></IconBtn>
            <Sep />
          </Side>
          <Title>Adobe Illustrator 2024</Title>
          <Side $end>
            <Share>Compartir</Share>
            <IconBtn aria-label="Buscar"><Lens s={18} /></IconBtn>
            <Sep />
            <IconBtn $w={37} aria-label="Organizar"><svg width="19" height="14" viewBox="0 0 19 14" fill="currentColor"><path d="M0 0h9v14H0zM10.500 0H19v6h-8.500zM10.500 7.500H19V14h-8.500z" /></svg></IconBtn>
            <IconBtn aria-label="Espacio de trabajo"><svg width="18" height="15" viewBox="0 0 18 15" fill="currentColor"><path fillRule="evenodd" d="M0 0h18v15H0zM1.500 2.500v11h15v-11z" /><path d="M2.500 3.500h3v2h-3zM2.500 6.500h3v2h-3zM2.500 9.500h3v2h-3z" /></svg></IconBtn>
          </Side>
        </TitleBar>
        <Controls />
        <Body>
          <Toolbox />
          <Center>
            <Tabs>
              <Tab $on $w={299}><TabX aria-label="Cerrar"><Cross /></TabX>ArchivoCorte.ai* @ 300 % (CMYK/Previsualizar)</Tab>
              <Tab $w={247}><TabX aria-label="Cerrar"><Cross /></TabX>12.svg @ 66,05 % (RGB/Previsualizar)</Tab>
            </Tabs>
            <CanvasRow>
              <Canvas>{Array.from({ length: 9 }, (_, i) => <Cell key={i} $d={i % 2 === 0} />)}</Canvas>
              <VScroll><Chev d="up" s={9} /><Grow $g={487} /><Thumb $w={16} $h={27} /><Grow $g={560} /><Chev s={9} /></VScroll>
            </CanvasRow>
            <Status>
              <StatusPick $w={75}><select aria-label="Zoom"><option>300%</option></select><Chev /></StatusPick>
              <StatusPick $w={75}><select aria-label="Rotación"><option>0°</option></select><Chev /></StatusPick>
              <StatusNav $w={41}><Tri l bar /><Tri l /></StatusNav>
              <StatusPick $w={63}><select aria-label="Mesa de trabajo"><option>1</option></select><Chev /></StatusPick>
              <StatusNav $w={44}><Tri /><Tri bar /></StatusNav>
              <StatusText><span>Conmutar selección directa</span><Tri /></StatusText>
              <HScroll><Chev d="left" s={9} /><Grow $g={660} /><Thumb $w={27} $h={16} /><Grow $g={767} /><Chev d="right" s={9} /></HScroll>
            </Status>
          </Center>
          <Right>
            <Strip>
              <StripTop $end aria-label="Expandir paneles"><Dbl l /></StripTop>
              {stripGroups.map((g, i) => (
                <Group key={i}>
                  <GripRow><Grip /></GripRow>
                  {g.map(([n, art]) => <StripBtn key={n} aria-label={n}>{art}</StripBtn>)}
                </Group>
              ))}
            </Strip>
            <Properties />
          </Right>
        </Body>
      </Win>
      <DockArea />
    </Screen>
  );
}
